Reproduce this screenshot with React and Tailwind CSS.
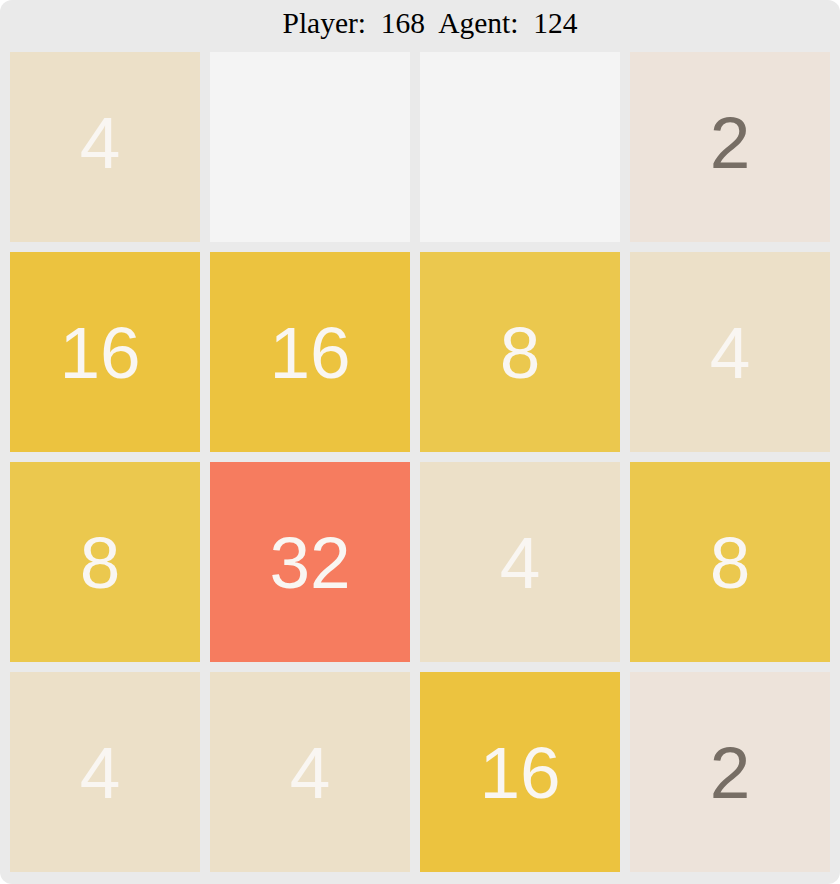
import React from "react";

const board = [
  [4, 0, 0, 2],
  [16, 16, 8, 4],
  [8, 32, 4, 8],
  [4, 4, 16, 2],
];

const styles = {
  0: "bg-[#f4f4f4] text-transparent",
  2: "bg-[#ede3da] text-[#776e65]",
  4: "bg-[#ece0c8] text-[#f9f6f2]",
  8: "bg-[#ebc84e] text-[#f9f6f2]",
  16: "bg-[#ecc33f] text-[#f9f6f2]",
  32: "bg-[#f67c5f] text-[#f9f6f2]",
};

function Tile({ value, r, c }) {
  const w = c === 0 ? "w-[190px] pr-[10px]" : "w-[200px]";
  const h = r === 0 ? "h-[190px] pb-[10px]" : "h-[200px]";
  return (
    <div
      className={`${w} ${h} ${styles[value]} flex items-center justify-center text-[73px] leading-none font-['Liberation_Sans',Arial,sans-serif]`}
    >
      {value ? value : ""}
    </div>
  );
}

export default function App() {
  return (
    <div className="w-[840px] h-[884px] bg-white">
      <div className="w-[840px] h-[884px] bg-[#eaeaea] rounded-[12px] flex flex-col">
        <div className="h-[52px] pl-[20px] pt-[1px] text-center text-[29.5px] text-black font-['Liberation_Serif','Times_New_Roman',serif] whitespace-pre">
          {"Player:  168  Agent:  124"}
        </div>
        <div className="pl-[10px] grid grid-cols-[190px_200px_200px_200px] grid-rows-[190px_200px_200px_200px] gap-[10px]">
          {board.map((row, r) =>
            row.map((v, c) => <Tile key={`${r}-${c}`} value={v} r={r} c={c} />)
          )}
        </div>
      </div>
    </div>
  );
}
